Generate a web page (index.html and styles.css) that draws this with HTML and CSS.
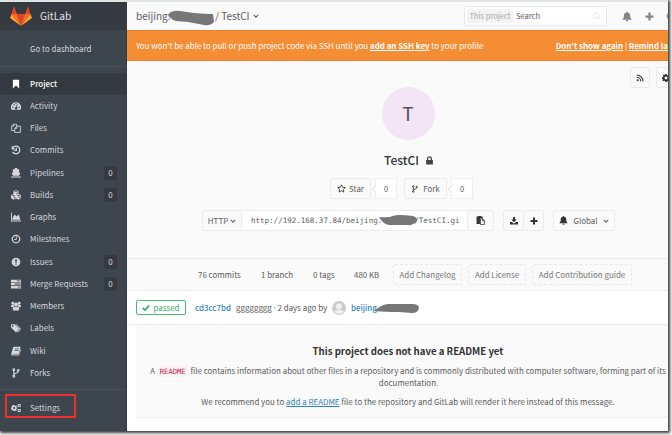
FILE: index.html
```html
<!DOCTYPE html>
<html lang="en">
<head>
<meta charset="utf-8">
<title>TestCI · GitLab</title>
<link rel="stylesheet" href="styles.css">
</head>
<body>
<svg class="defs" aria-hidden="true">
  <symbol id="bookmark" viewBox="0 0 16 16"><path d="M3 1h10v14l-5-4.500L3 15z"/></symbol>
  <symbol id="gauge" viewBox="0 0 16 16"><path fill-rule="evenodd" d="M8 2a8 8 0 0 0-7 12h14A8 8 0 0 0 8 2zM2 9h2v2H2zm2-4h2v2H4zm3-2h2v2H7zm5 6h2v2h-2zM10 5l1 .5-1.500 4.500a2 2 0 1 1-1.500-.5z"/></symbol>
  <symbol id="files" viewBox="0 0 16 16"><path fill="none" stroke="currentColor" stroke-width="1.400" d="M5 12H1V5l3-3h5v3M4 2v3H1M6 15V8l3-3h6v10zM9.500 5v3.500H6"/></symbol>
  <symbol id="history" viewBox="0 0 16 16"><path fill="none" stroke="currentColor" stroke-width="2" d="M3 4a6.200 6.200 0 1 1-.5 7M8.500 4.500v4H5.500"/><path d="M1 1v6h6z"/></symbol>
  <symbol id="ship" viewBox="0 0 16 16"><path d="M6 0h4v2h3v5l2 1-2 4c-1 0-1.500 1-2.500 1S9 12 8 12s-1.500 1-2.500 1S4 12 3 12L1 8l2-1V2h3zM0 13.500h16V15H0z"/></symbol>
  <symbol id="cubes" viewBox="0 0 16 16"><path fill-rule="evenodd" d="M8 0l4 2v4.500l4 2V13l-4 2.500L8 13.500l-4 2L0 13V8.500l4-2V2zM8 1.300L5.500 2.500 8 3.700l2.500-1.200zM4 8L1.500 9.200 4 10.500l2.500-1.300zm8 0L9.500 9.200l2.500 1.300 2.500-1.300zM8.700 5v2l2-1V4zM4.700 11.800v2l2.300-1.300v-2zm8 0v2l2.300-1.300v-2z"/></symbol>
  <symbol id="graph" viewBox="0 0 16 16"><path d="M0 1h1.500v12.500H16V15H0zM2.500 12.500V9L6 4l3 3 3.500-3L15 12.500z"/></symbol>
  <symbol id="clock" viewBox="0 0 16 16"><circle cx="8" cy="8" r="6" fill="none" stroke="currentColor" stroke-width="2"/><path fill="none" stroke="currentColor" stroke-width="1.500" d="M8.500 4v4.700H5"/></symbol>
  <symbol id="issue" viewBox="0 0 16 16"><path fill-rule="evenodd" d="M8 1a7 7 0 1 0 0 14A7 7 0 0 0 8 1zM6.700 3h2.600L9 9H7zm.3 7.500h2v2H7z"/></symbol>
  <symbol id="tasks" viewBox="0 0 16 16"><path fill-rule="evenodd" d="M0 1h16v4H0zm9 1.200v1.500h6V2.200zM0 6h16v4H0zm6 1.200v1.500h9V7.200zM0 11h16v4H0zm11 1.200v1.500h4v-1.500z"/></symbol>
  <symbol id="users" viewBox="0 0 16 16"><circle cx="8" cy="5.500" r="3"/><circle cx="3" cy="3.500" r="2.300"/><circle cx="13" cy="3.500" r="2.300"/><path d="M3 15c-1-4 1-6 3-6h4c2 0 4 2 3 6zM0 9c0-2 1-3 3-3h1.500l.5 2.500L3 10H1zm16 0c0-2-1-3-3-3h-1.500L11 8.500l2 1.500h2z"/></symbol>
  <symbol id="tags" viewBox="0 0 16 16"><path fill-rule="evenodd" d="M0 2h6l7 7-5 6-8-8zm3 1.500A1.300 1.300 0 1 0 3 6a1.300 1.300 0 0 0 0-2.500zM7 2h1.500L16 9l-5 6-1-1 4-5z"/></symbol>
  <symbol id="book" viewBox="0 0 16 16"><path fill-rule="evenodd" d="M5 1h10.500L12 13H3c-1 0-1 1 0 1h9.500L15 5l1 .5L13 15H2.500C0 15 0 13 .5 12L3.500 2zm1.500 3L6 5h6l.5-1zM6 6.500l-.5 1h6l.5-1z"/></symbol>
  <symbol id="fork" viewBox="0 0 16 16"><g fill="none" stroke="currentColor" stroke-width="1.700"><circle cx="4.500" cy="2.800" r="1.400"/><circle cx="4.500" cy="13.200" r="1.400"/><circle cx="11.500" cy="3.800" r="1.400"/><path d="M4.500 4v8M11.500 5c0 4-7 2.500-7 6"/></g></symbol>
  <symbol id="gear" viewBox="0 0 16 16"><path fill-rule="evenodd" d="M6.500 0h3l.5 2 1.500.7L13.500 1.500l1.500 2-1 2 .3 1L16 7v3l-2 .5-.7 1.500 1 2-2 1.500-2-1.200L9 16H6.500L6 14l-1.500-.7-2 1L.7 12.500l1.200-2L0 9.500v-3L2 6l.7-1.500-1-2 2-1.500 2 1zM8 5.200a2.800 2.800 0 1 0 0 5.600 2.800 2.800 0 0 0 0-5.600z"/></symbol>
  <symbol id="cogs" viewBox="0 0 16 16"><use href="#gear" x="0" y="3" width="10" height="10"/><use href="#gear" x="10" y="1" width="6" height="6"/><use href="#gear" x="10" y="9" width="6" height="6"/></symbol>
  <symbol id="bell" viewBox="0 0 16 16"><path d="M8 0c1 0 1 1 1 1.500 3 .5 4 2.500 4 5 0 3 .7 4.500 2.500 6.500H.5C2.300 11 3 9.500 3 6.500c0-2.500 1-4.500 4-5C7 1 7 0 8 0zM6 13.700h4a2 2 0 0 1-4 0z"/></symbol>
  <symbol id="plus" viewBox="0 0 16 16"><path d="M6 1h4v5h5v4h-5v5H6v-5H1V6h5z"/></symbol>
  <symbol id="search" viewBox="0 0 16 16"><g fill="none" stroke="currentColor" stroke-width="1.500"><circle cx="7" cy="7" r="5.500"/><path d="M11 11l4 4"/></g></symbol>
  <symbol id="chevron" viewBox="0 0 16 16"><path fill="none" stroke="currentColor" stroke-width="3" d="M2 5l6 6 6-6"/></symbol>
  <symbol id="rss" viewBox="0 0 16 16"><circle cx="3.500" cy="12.500" r="2"/><path fill="none" stroke="currentColor" stroke-width="2.200" d="M1.500 6.500a8 8 0 0 1 8 8M1.500 2a12.500 12.500 0 0 1 12.500 12.500"/></symbol>
  <symbol id="lock" viewBox="0 0 16 16"><path fill-rule="evenodd" d="M2 7h1.500V5a4.500 4.500 0 0 1 9 0v2H14v8H2zm3.700 0h4.600V5a2.300 2.300 0 0 0-4.600 0z"/></symbol>
  <symbol id="star" viewBox="0 0 16 16"><path fill="none" stroke="currentColor" stroke-width="1.500" stroke-linejoin="round" d="M8 1.500l2 4.300 4.700.6-3.400 3.200.9 4.700L8 12l-4.200 2.300.9-4.700L1.300 6.400 6 5.800z"/></symbol>
  <symbol id="paste" viewBox="0 0 16 16"><path d="M1 1h3V0h5v1h3v3H7v10H1z"/><path fill="none" stroke="currentColor" stroke-width="1.400" d="M8 5h4l3 3v7H8zM11.500 5v3.500H15"/></symbol>
  <symbol id="download" viewBox="0 0 16 16"><path d="M6 0h4v5h3.500L8 10.500 2.500 5H6zM0 10h4l4 3.500 4-3.500h4v5H0z"/></symbol>
  <symbol id="check" viewBox="0 0 16 16"><path fill="none" stroke="currentColor" stroke-width="3.600" d="M1.500 8l4.500 4 8.500-9"/></symbol>
</svg>
<div class="window">
  <aside class="sidebar">
    <div class="brand">
      <svg class="logo" viewBox="0 0 22 20"><path fill="#e24329" d="M11 20L7 8h8z"/><path fill="#fc6d26" d="M11 20L7 8H1.500zM11 20l4-12h5.500z"/><path fill="#fca326" d="M1.500 8L0 12l11 8zM20.500 8l1.500 4-11 8z"/><path fill="#e24329" d="M1.500 8L4 0l3 8zM20.500 8L18 0l-3 8z"/></svg>
      <span>GitLab</span>
    </div>
    <a class="dash">Go to dashboard</a>
    <nav class="nav">
      <a class="item active"><svg><use href="#bookmark"/></svg><span>Project</span></a>
      <a class="item"><svg><use href="#gauge"/></svg><span>Activity</span></a>
      <a class="item"><svg><use href="#files"/></svg><span>Files</span></a>
      <a class="item"><svg><use href="#history"/></svg><span>Commits</span></a>
      <a class="item"><svg><use href="#ship"/></svg><span>Pipelines</span><b>0</b></a>
      <a class="item"><svg><use href="#cubes"/></svg><span>Builds</span><b>0</b></a>
      <a class="item"><svg><use href="#graph"/></svg><span>Graphs</span></a>
      <a class="item"><svg><use href="#clock"/></svg><span>Milestones</span></a>
      <a class="item"><svg><use href="#issue"/></svg><span>Issues</span><b>0</b></a>
      <a class="item"><svg><use href="#tasks"/></svg><span>Merge Requests</span><b>0</b></a>
      <a class="item"><svg><use href="#users"/></svg><span>Members</span></a>
      <a class="item"><svg><use href="#tags"/></svg><span>Labels</span></a>
      <a class="item"><svg><use href="#book"/></svg><span>Wiki</span></a>
      <a class="item"><svg><use href="#fork"/></svg><span>Forks</span></a>
    </nav>
    <a class="item settings"><svg><use href="#cogs"/></svg><span>Settings</span></a>
  </aside>
  <main class="main">
    <header class="topbar">
      <div class="crumb"><span class="owner">beijing.</span><svg class="scrib scrib-top" viewBox="0 0 46 16"><path d="M0 5Q3 0 12 1l14 2q10 1 19 1l1 8q-4 4-10 3L20 12 8 11Q2 9 0 5z"/></svg><span class="repo">/ TestCI</span><svg class="chev"><use href="#chevron"/></svg></div>
      <div class="search"><span class="scope">This project</span><span class="query">Search</span><svg><use href="#search"/></svg></div>
      <svg class="tool bell"><use href="#bell"/></svg>
      <svg class="tool plus"><use href="#plus"/></svg>
      <svg class="tool todo"><use href="#clock"/></svg>
    </header>
    <div class="alert"><span class="msg">You won't be able to pull or push project code via SSH until you <a>add an SSH key</a> to your profile</span><span class="acts"><a>Don't show again</a> | <a>Remind la</a></span></div>
    <section class="hero">
      <div class="corner"><a class="btn"><svg><use href="#rss"/></svg></a><a class="btn"><svg><use href="#gear"/></svg></a></div>
      <div class="avatar">T</div>
      <h1 class="title"><span>TestCI</span><svg><use href="#lock"/></svg></h1>
      <div class="row social">
        <a class="btn star"><svg><use href="#star"/></svg>Star</a><span class="count">0</span>
        <a class="btn forkbtn"><svg><use href="#fork"/></svg>Fork</a><span class="count">0</span>
      </div>
      <div class="row clone">
        <a class="btn http">HTTP<svg class="chev"><use href="#chevron"/></svg></a>
        <div class="url"><span>http://192.168.37.84/beijing.</span><svg class="scrib scrib-url" viewBox="0 0 38 11"><path d="M0 2Q10 3 14 1t20 0q4 1 4 4-3 6-10 5L10 10Q4 9 0 2z"/></svg><span>/TestCI.gi</span></div>
        <a class="btn copy"><svg><use href="#paste"/></svg></a>
        <a class="btn down"><svg><use href="#download"/></svg></a>
        <a class="btn add"><svg><use href="#plus"/></svg></a>
        <a class="btn global"><svg><use href="#bell"/></svg>Global<svg class="chev"><use href="#chevron"/></svg></a>
      </div>
    </section>
    <section class="stats">
      <span class="s1">76 commits</span><span class="s2">1 branch</span><span class="s3">0 tags</span><span class="s4">480 KB</span>
      <a class="dashed a1">Add Changelog</a><a class="dashed a2">Add License</a><a class="dashed a3">Add Contribution guide</a>
    </section>
    <section class="commit">
      <span class="passed"><svg><use href="#check"/></svg>passed</span>
      <a class="sha">cd3cc7bd</a><span class="info">gggggggg <i>·</i> 2 days ago by</span>
      <svg class="face" viewBox="0 0 14 14"><circle cx="7" cy="7" r="7" fill="#ccc"/><circle cx="7" cy="5.500" r="3" fill="#f0f0f0"/><path fill="#f0f0f0" d="M2 11q1-2 4-2h2q3 0 4 2-5 4-10 0z"/></svg>
      <a class="author">beijing.</a><svg class="scrib scrib-author" viewBox="0 0 44 11"><path d="M0 7Q8 1 13 1l24 0q7 0 7 4-1 5-7 5l-13-1Q10 9 0 8z"/></svg>
    </section>
    <section class="readme">
      <h2>This project does not have a README yet</h2>
      <p class="p1">A <code>README</code> file contains information about other files in a repository and is commonly distributed with computer software, forming part of its</p>
      <p class="p2">documentation.</p>
      <p class="p3">We recommend you to <a>add a README</a> file to the repository and GitLab will render it here instead of this message.</p>
    </section>
  </main>
  <div class="highlight"></div>
</div>
</body>
</html>
```
FILE: styles.css
```css
* { box-sizing: border-box; }
html, body { margin: 0; width: 672px; height: 435px; overflow: hidden; }
body { background: #fff; font: 7.95px/14px "Noto Sans CJK SC", sans-serif; color: #5c5c5c; }
.defs { position: absolute; width: 0; height: 0; }
svg { fill: currentColor; flex: none; display: block; }
span, a, b, p { white-space: nowrap; }
.window { position: relative; display: flex; width: 668px; height: 431px; border-top: 2px solid #dfe3e2; box-shadow: 1px 1px 3px 1px #333; }

.sidebar { width: 127px; background: #3d454d; border-right: 1px solid #353b42; color: #d6d8da; }
.brand { display: flex; align-items: center; height: 28px; padding-left: 10px; gap: 8px; background: #353a40; font-size: 10.200px; color: #e0e1e2; }
.logo { width: 22px; height: 20px; }
.dash { display: flex; align-items: center; height: 37px; padding: 2px 0 0 30px; border-bottom: 1px solid #485059; }
.nav { padding: 5.500px 0 6px; border-bottom: 1px solid #485059; height: 323px; }
.item { display: flex; align-items: center; height: 22.250px; padding: 0 9px 0 11px; }
.item svg { width: 10px; height: 10px; margin-right: 9px; }
.item b { margin-left: auto; width: 13px; height: 14px; border-radius: 3px; background: #343a40; text-align: center; font-weight: 400; }
.active { background: #353a40; color: #fff; font-weight: 500; }
.settings { margin-top: 7px; }
.highlight { position: absolute; left: 5px; top: 392px; width: 71px; height: 24px; border: 2px solid #ee3035; }

.main { width: 541px; overflow: hidden; background: #fff; }
.topbar { display: flex; align-items: center; height: 28px; background: #fafafa; padding-left: 9px; }
.topbar > * { flex: none; }
.crumb { display: flex; align-items: center; width: 328px; font-size: 10px; }
.owner { width: 33px; }
.scrib { fill: #777; }
.scrib-top { width: 46px; height: 16px; margin: 3px 1px 0 -1px; }
.repo { width: 38px; }
.chev { width: 6px; height: 6px; }
.search { display: flex; align-items: center; width: 143px; height: 20px; border: 1px solid #e8e8e8; border-radius: 2px; background: #fff; padding: 0 5px 0 2px; font-size: 7.500px; }
.scope { width: 46px; height: 14px; background: #f3f3f3; color: #a5a5a5; text-align: center; }
.query { margin-left: 3px; }
.search svg { margin-left: auto; width: 8px; height: 8px; color: #ddd; }
.tool { color: #858585; }
.bell.tool { width: 10px; height: 11px; margin-left: 15px; }
.plus.tool { width: 9px; height: 9px; margin-left: 13px; }
.todo { width: 10px; height: 10px; margin-left: 12px; }
.alert { display: flex; align-items: center; height: 31px; padding-left: 9px; background: #f58d35; border: solid #ee7e35; border-width: 1px 0; color: #fff; }
.alert a { font-weight: 700; text-decoration: underline; }
.msg { width: 421px; }

.hero { position: relative; height: 198px; background: #fafafa; border-bottom: 1px solid #ececec; padding-top: 26px; }
.corner { position: absolute; left: 503px; top: 6px; display: flex; gap: 6px; }
.corner .btn { width: 20px; }
.btn { display: flex; align-items: center; justify-content: center; height: 21px; border: 1px solid #ebebeb; border-radius: 2px; background: #fafafa; flex: none; }
.btn svg { width: 8px; height: 8px; color: #333; }
.avatar { width: 53px; height: 53px; margin-left: 254.500px; border-radius: 50%; background: #f3e5f5; color: #555; font-size: 19px; line-height: 52px; text-align: center; }
.title { display: flex; align-items: center; height: 20px; margin: 10px 0 0 257px; font-size: 12px; font-weight: 500; color: #333; }
.title span { width: 41px; }
.title svg { width: 9px; height: 9px; color: #444; }
.row { display: flex; }
.social { margin: 8px 0 0 203px; }
.star { width: 41px; gap: 3px; }
.star svg { width: 9px; height: 9px; }
.forkbtn { width: 43px; gap: 4px; }
.count { position: relative; width: 22px; height: 21px; margin: 0 7px 0 4px; border: 1px solid #eee; background: #fff; text-align: center; line-height: 19px; font-size: 7.500px; }
.count::before { content: ""; position: absolute; left: -3px; top: 7px; width: 5px; height: 5px; border: solid #e8e8e8; border-width: 0 0 1px 1px; background: #fff; transform: rotate(45deg); }
.clone { margin: 11px 0 0 75px; }
.http { width: 40px; gap: 2px; }
.url { display: flex; align-items: center; width: 225px; height: 21px; border: solid #ebebeb; border-width: 1px 0; background: #fff; padding-left: 9px; font: 7.530px "DejaVu Sans Mono", monospace; }
.scrib-url { width: 38px; height: 11px; margin: 0 -3px 0 -3px; }
.copy { width: 27px; }
.copy svg { width: 9px; height: 9px; }
.down { width: 21px; margin-left: 9px; }
.add { width: 20px; border-left: 0; }
.global { width: 62px; margin-left: 9px; gap: 5px; }
.global svg { width: 9px; height: 9px; }
.global .chev, .http .chev { width: 6px; height: 6px; color: #666; }

.stats { display: flex; align-items: center; height: 32px; padding-left: 71px; background: #fafafa; border-bottom: 1px solid #ececec; }
.s1 { width: 63px; } .s2 { width: 52px; } .s3 { width: 41px; } .s4 { width: 39px; }
.dashed { height: 21px; border: 1px dashed #e8e8e8; border-radius: 2px; line-height: 19px; text-align: center; color: #777; }
.a1 { width: 69px; margin-right: 6px; } .a2 { width: 58px; margin-right: 6px; } .a3 { width: 100px; }

.commit { display: flex; align-items: center; height: 34px; padding-left: 9px; border-bottom: 1px solid #ececec; }
.passed { display: flex; align-items: center; justify-content: center; gap: 3px; width: 50px; height: 15px; border: 1px solid #4db872; border-radius: 2px; color: #31af64; }
.passed svg { width: 8px; height: 8px; }
.sha { width: 41px; margin-left: 9px; color: #3084bb; font-weight: 500; }
.info { width: 96px; }
.info i { font: 8px "Noto Sans", sans-serif; }
.face { width: 14px; height: 14px; }
.author { width: 26px; margin-left: 5px; color: #3084bb; font-weight: 500; }
.scrib-author { width: 44px; height: 11px; margin: 2px 0 0 -2px; }

.readme { height: 93px; margin-left: 9px; background: #fafafa; border-bottom: 1px solid #ececec; padding-top: 18px; text-align: center; }
.readme h2 { margin: 0 0 6px 12px; font-size: 9.650px; line-height: 16px; font-weight: 700; color: #333; }
.readme p { margin: 0; line-height: 12px; text-align: center; }
.readme .p1 { margin-left: 12px; }
.p1 code { padding: 1px 2px; margin: 0 1px; border-radius: 2px; background: #f9f2f4; color: #c7254e; font: 7.200px "DejaVu Sans Mono", monospace; }
.readme .p2 { margin-left: 13px; }
.readme .p3 { margin: 7px 0 0 12px; }
.readme a { color: #3084bb; text-decoration: underline; }
```
